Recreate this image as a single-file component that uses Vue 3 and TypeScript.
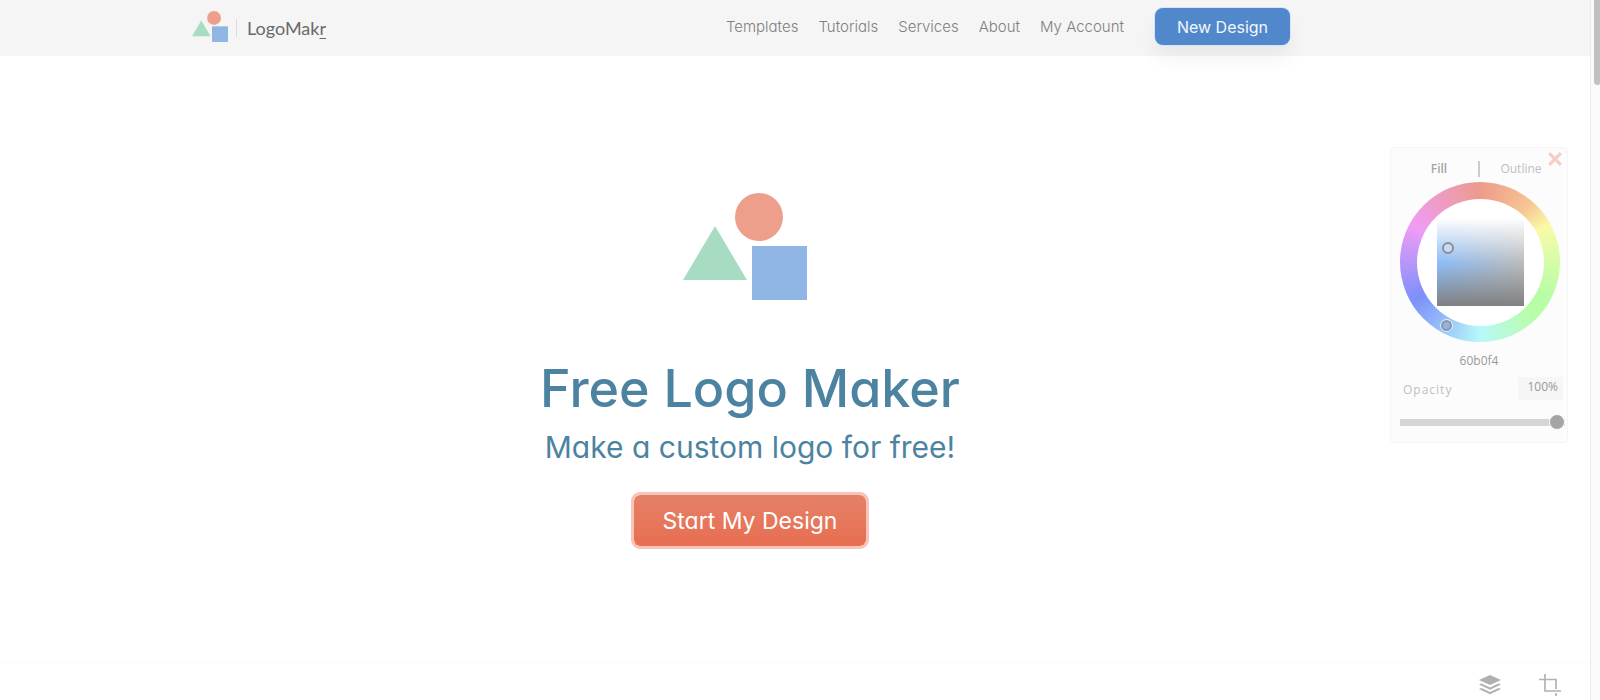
<script setup lang="ts">
import { ref } from 'vue'

interface NavItem {
  label: string
  href: string
}

const navItems: NavItem[] = [
  { label: 'Templates', href: '#templates' },
  { label: 'Tutorials', href: '#tutorials' },
  { label: 'Services', href: '#services' },
  { label: 'About', href: '#about' },
  { label: 'My Account', href: '#account' },
]

const opacity = ref<number>(100)
const hex = ref<string>('60b0f4')
const tab = ref<'fill' | 'outline'>('fill')
</script>

<template>
  <div class="app">
    <div class="page">
      <header class="header">
        <a class="brand" href="#home">
          <svg class="brand-mark" viewBox="0 0 124 107" aria-hidden="true">
            <circle cx="76" cy="24" r="24" fill="#ee9f8b" />
            <path d="M32 33 L64 87 H0 Z" fill="#a8dcc2" />
            <rect x="69" y="53" width="55" height="54" fill="#8eb5e3" />
          </svg>
          <span class="brand-name">LogoMak<span class="brand-r">r</span></span>
        </a>
        <nav class="nav">
          <a v-for="item in navItems" :key="item.label" :href="item.href">{{ item.label }}</a>
        </nav>
        <button class="new-design" type="button">New Design</button>
      </header>

      <main class="main">
        <section class="hero">
          <svg class="hero-mark" viewBox="0 0 124 107" aria-hidden="true">
            <circle cx="76" cy="24" r="24" fill="#ee9f8b" />
            <path d="M32 33 L64 87 H0 Z" fill="#a8dcc2" />
            <rect x="69" y="53" width="55" height="54" fill="#8eb5e3" />
          </svg>
          <h1>Free Logo Maker</h1>
          <p>Make a custom logo for free!</p>
          <button class="start" type="button">Start My Design</button>
        </section>

        <aside class="palette" aria-label="Color">
          <button class="close" type="button" aria-label="Close">
            <svg viewBox="0 0 12 12"><path d="M2 2 L10 10 M10 2 L2 10" stroke="#f6cdc3" stroke-width="2.700" stroke-linecap="square" /></svg>
          </button>
          <div class="tabs">
            <button type="button" :class="{ active: tab === 'fill' }" @click="tab = 'fill'">Fill</button>
            <span class="divider"></span>
            <button type="button" :class="{ active: tab === 'outline' }" @click="tab = 'outline'">Outline</button>
          </div>
          <div class="wheel">
            <div class="wheel-hole">
              <div class="shade"></div>
            </div>
            <span class="marker shade-marker"></span>
            <span class="marker hue-marker"></span>
          </div>
          <input v-model="hex" class="hex" type="text" aria-label="Hex color" />
          <div class="opacity-row">
            <label for="opacity">Opacity</label>
            <output for="opacity">{{ opacity }}%</output>
          </div>
          <input id="opacity" v-model="opacity" class="slider" type="range" min="0" max="100" />
        </aside>
      </main>

      <footer class="tools">
        <button type="button" aria-label="Layers">
          <svg viewBox="0 0 24 24" fill="#aeb0b1">
            <path d="M12 2 L23 7 L12 12 L1 7 Z" />
            <path d="M1 11.500 L3.500 10.400 L12 14.500 L20.500 10.400 L23 11.500 L12 16.700 Z" />
            <path d="M1 16 L3.500 14.900 L12 19 L20.500 14.900 L23 16 L12 21.200 Z" />
          </svg>
        </button>
        <button type="button" aria-label="Crop">
          <svg viewBox="0 0 24 24" fill="none" stroke="#b0b2b3" stroke-width="1.700">
            <path d="M7 1 V18 H23 M1 6.500 H18 V16 M18 20 V23" />
          </svg>
        </button>
      </footer>
    </div>
    <div class="scrollbar" aria-hidden="true"><div class="thumb"></div></div>
  </div>
</template>

<style>
body {
  margin: 0;
  background: #fff;
}
</style>

<style scoped>
* {
  box-sizing: border-box;
}

button {
  padding: 0;
  border: 0;
  background: none;
  font: inherit;
  cursor: pointer;
}

a {
  color: inherit;
  text-decoration: none;
}

.app {
  display: flex;
  min-height: 100vh;
  font-family: Inter, 'Open Sans', sans-serif;
  font-feature-settings: 'cv11';
}

.page {
  flex: 1;
  display: flex;
  flex-direction: column;
}

.header {
  display: flex;
  align-items: flex-start;
  height: 56px;
  padding: 8px 300px 0 192px;
  background: #f5f5f5;
}

.brand {
  display: flex;
  align-items: flex-start;
  padding-top: 3px;
}

.brand-mark {
  width: 36px;
  height: 31px;
}

.brand-name {
  margin: 8px 0 0 8px;
  padding-left: 10px;
  border-left: 1px solid #dcdcdc;
  color: #6a6a6a;
  font-family: Lato, sans-serif;
  font-size: 18px;
  line-height: 18px;
}

.brand-r {
  text-decoration: underline;
  text-underline-offset: 3px;
}

.nav {
  display: flex;
  gap: 20px;
  margin: 9px 31px 0 auto;
  color: #808080;
  font-size: 15px;
  font-weight: 300;
  line-height: 20px;
}

.new-design {
  width: 135px;
  height: 37px;
  border-radius: 8px;
  background: #5088cb;
  box-shadow: 0 0 0 1px #d5e5f8, 0 14px 20px rgba(0, 0, 0, 0.05);
  color: #f3f7fc;
  font-size: 16px;
}

.main {
  flex: 1;
  display: flex;
  align-items: flex-start;
  padding: 91px 22px 0 110px;
}

.hero {
  flex: 1;
  display: flex;
  flex-direction: column;
  align-items: center;
  padding-top: 46px;
  color: #4c83a1;
}

.hero-mark {
  width: 124px;
  height: 107px;
  margin-right: 10px;
}

.hero h1 {
  margin: 57px 0 0;
  font-size: 52px;
  font-weight: 500;
  line-height: 64px;
}

.hero p {
  margin: 6px 0 0;
  font-size: 30px;
  line-height: 40px;
}

.start {
  width: 238px;
  height: 57px;
  margin-top: 25px;
  border: 3px solid #f6c4b9;
  border-radius: 9px;
  background: linear-gradient(#e58167, #e86e51) padding-box;
  color: #fff;
  font-size: 23px;
}

.palette {
  position: relative;
  width: 178px;
  padding: 12px 4px 12px 9px;
  border: 1px solid #f5f5f5;
  border-radius: 4px;
  background: #fcfcfc;
  color: #c0c0c0;
  font-family: 'Open Sans', sans-serif;
  font-size: 12px;
}

.close {
  position: absolute;
  top: 4px;
  right: 5px;
  width: 14px;
  height: 14px;
}

.close svg {
  display: block;
}

.tabs {
  display: grid;
  grid-template-columns: 78px 2px 82px;
  align-items: center;
  height: 18px;
}

.tabs button {
  line-height: 18px;
  color: #c0c0c0;
  text-align: center;
}

.tabs .active {
  color: #a5a5a5;
  font-weight: 600;
}

.divider {
  height: 16px;
  background: #ccc;
}

.wheel {
  position: relative;
  display: grid;
  place-items: center;
  width: 160px;
  height: 160px;
  margin-top: 4px;
  border-radius: 50%;
  background: conic-gradient(#ed9b8b, #f6c592 40deg, #f8fba8 62deg, #b8fda5 115deg, #b8fda8 135deg, #b8f8fb 180deg, #92b9f8 215deg, #7c90fb 240deg, #ef9cf5 298deg, #ed9b8b);
}

.wheel-hole {
  display: grid;
  place-items: center;
  width: 127px;
  height: 127px;
  border-radius: 50%;
  background: #fff;
}

.shade {
  width: 87px;
  height: 87px;
  background:
    linear-gradient(#fdfdfd, rgba(253, 253, 253, 0) 50%, rgba(128, 128, 128, 0) 50%, #808080),
    linear-gradient(90deg, #8dbdf8, #bcbcbc);
}

.marker {
  position: absolute;
  width: 12px;
  height: 12px;
  border: 2px solid #8c8f92;
  border-radius: 50%;
}

.shade-marker {
  top: 60px;
  left: 42px;
  background: #c5dcf7;
}

.hue-marker {
  top: 138px;
  left: 41px;
  width: 11px;
  height: 11px;
  border-color: #8b97a8;
  background: #8fb4e6;
  box-shadow: 0 0 0 1px #e4eefa;
}

.hex {
  display: block;
  width: 158px;
  height: 18px;
  margin-top: 9px;
  padding: 0;
  border: 0;
  background: none;
  color: #999;
  font: inherit;
  text-align: center;
}

.opacity-row {
  display: flex;
  align-items: flex-start;
  justify-content: space-between;
  height: 24px;
  margin-top: 8px;
  padding-left: 3px;
}

.opacity-row label {
  padding-top: 4px;
  letter-spacing: 1px;
}

.opacity-row output {
  width: 45px;
  padding: 0 5px 3px 0;
  background: #f6f6f6;
  color: #999;
  line-height: 20px;
  text-align: right;
}

.slider {
  display: block;
  width: 165px;
  height: 16px;
  margin: 13px 0 0;
  appearance: none;
  background: linear-gradient(#d6d6d6, #d6d6d6) center / 100% 7px no-repeat;
}

.slider::-webkit-slider-thumb {
  appearance: none;
  width: 16px;
  height: 16px;
  border: 1px solid #fcfcfc;
  border-radius: 50%;
  background: #a3a5a7;
}

.tools {
  display: flex;
  justify-content: flex-end;
  gap: 36px;
  height: 38px;
  padding: 10px 28px 0 0;
  border-top: 1px solid #fafafa;
}

.tools button {
  width: 24px;
  height: 24px;
}

.tools svg {
  display: block;
  width: 24px;
  height: 24px;
}

.scrollbar {
  width: 10px;
  padding-left: 3px;
  border-left: 1px solid #ececec;
  background: #fafafa;
}

.thumb {
  height: 85px;
  border-radius: 0 0 3px 4px;
  background: #c1c1c1;
}
</style>
